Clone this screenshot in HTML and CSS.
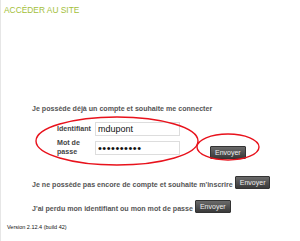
FILE: index.html
```html
<!DOCTYPE html>
<html lang="fr">
<head>
    <meta charset="UTF-8">
    <title>Accéder au site</title>
    <link rel="stylesheet" href="styles.css">
</head>
<body>

<div class="page">
    <h1 class="title">Accéder au site</h1>

    <div class="section connect">
        <p class="intro">Je possède déjà un compte et souhaite me connecter</p>
        <div class="form">
            <div class="fields">
                <div class="row">
                    <label for="login">Identifiant</label>
                    <input type="text" id="login" value="mdupont">
                </div>
                <div class="row">
                    <label for="pass">Mot de<br>passe</label>
                    <input type="password" id="pass" class="secret" value="motdepasse">
                </div>
            </div>
            <button class="btn send">Envoyer</button>
        </div>
        <svg class="marks" width="300" height="241" viewBox="0 0 300 241">
            <ellipse cx="117" cy="141" rx="81" ry="24" fill="none" stroke="#e8121c" stroke-width="1.4"/>
            <ellipse cx="228" cy="147" rx="31" ry="13" fill="none" stroke="#e8121c" stroke-width="1.4"/>
        </svg>
    </div>

    <div class="section line">
        <span>Je ne possède pas encore de compte et souhaite m'inscrire</span>
        <button class="btn">Envoyer</button>
    </div>

    <div class="section line">
        <span>J'ai perdu mon identifiant ou mon mot de passe</span>
        <button class="btn">Envoyer</button>
    </div>

    <p class="version">Version 2.12.4 (build 42)</p>
</div>

</body>
</html>
```

FILE: styles.css
```css
body {
    margin: 0;
    font-family: "Liberation Sans", Arial, sans-serif;
    background: #fff;
}
.page {
    position: relative;
    height: 241px;
    border-left: 1px solid #e6e6e6;
    box-sizing: border-box;
    padding: 5px 0 0 3px;
}
.title {
    margin: 0;
    font-size: 8.4px;
    font-weight: normal;
    color: #a3c03a;
    text-transform: uppercase;
}
.section {
    padding-left: 28px;
    color: #555;
    font-size: 7.1px;
    font-weight: bold;
}
.connect {
    margin-top: 90px;
}
.intro {
    margin: 0 0 9px;
}
.form {
    display: flex;
    align-items: flex-end;
    padding-left: 25px;
}
.fields {
    display: flex;
    flex-direction: column;
    gap: 3px;
}
.row {
    display: flex;
    align-items: center;
}
.row label {
    width: 38px;
    color: #444;
    line-height: 9px;
}
.row input {
    width: 79px;
    height: 12px;
    padding: 0 2px;
    border: 1px solid #ddd;
    font-family: "Liberation Sans", Arial, sans-serif;
    font-size: 9px;
    color: #111;
}
.row .secret {
    font-size: 11px;
    letter-spacing: 0.5px;
}
.btn {
    font-family: "Liberation Sans", Arial, sans-serif;
    font-size: 7px;
    color: #eee;
    background: linear-gradient(#6a6a6a, #3a3a3a);
    border: 1px solid #333;
    border-radius: 1px;
    padding: 0 4px;
    height: 13px;
}
.send {
    margin-left: 30px;
    margin-bottom: -2px;
}
.marks {
    position: absolute;
    left: -1px;
    top: 0;
    pointer-events: none;
}
.line {
    display: flex;
    align-items: flex-end;
    gap: 2px;
    margin-top: 19px;
}
.line + .line {
    margin-top: 11px;
}
.version {
    margin: 11px 0 0 3px;
    font-size: 5.5px;
    color: #111;
}
```
